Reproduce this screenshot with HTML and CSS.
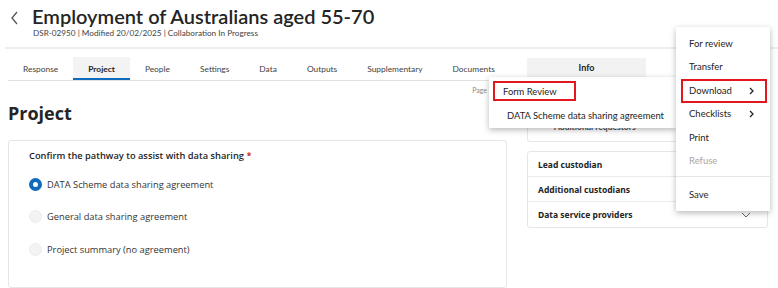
FILE: index.html
```html
<!DOCTYPE html>
<html lang="en">
<head>
    <meta charset="UTF-8">
    <title>Employment of Australians aged 55-70</title>
    <link rel="stylesheet" href="styles.css">
</head>
<body>

    <div class="header">
        <svg class="back" width="10" height="14" viewBox="0 0 10 14">
            <path d="M7 1 L2 7 L7 13" fill="none" stroke="#555" stroke-width="1.3"/>
        </svg>
        <div>
            <h1>Employment of Australians aged 55-70</h1>
            <div class="meta">DSR-02950 | Modified 20/02/2025 | Collaboration In Progress</div>
        </div>
    </div>

    <div class="layout">
        <div class="main">
            <div class="tabs">
                <div class="tab">Response</div>
                <div class="tab active">Project</div>
                <div class="tab">People</div>
                <div class="tab">Settings</div>
                <div class="tab">Data</div>
                <div class="tab">Outputs</div>
                <div class="tab">Supplementary</div>
                <div class="tab">Documents</div>
            </div>
            <div class="pager">Page</div>
            <h2>Project</h2>
            <div class="card">
                <div class="question">Confirm the pathway to assist with data sharing <span class="req">*</span></div>
                <label class="option"><span class="radio checked"></span>DATA Scheme data sharing agreement</label>
                <label class="option"><span class="radio"></span>General data sharing agreement</label>
                <label class="option"><span class="radio"></span>Project summary (no agreement)</label>
            </div>
        </div>

        <div class="side">
            <div class="info-tab">Info</div>
            <div class="side-box">Additional requestors</div>
            <div class="side-card">
                <div class="side-row">Lead custodian</div>
                <div class="side-row">Additional custodians</div>
                <div class="side-row">Data service providers
                    <svg width="10" height="6" viewBox="0 0 10 6"><path d="M1 1 L5 5 L9 1" fill="none" stroke="#666" stroke-width="1"/></svg>
                </div>
            </div>
        </div>
    </div>

    <!-- download submenu -->
    <div class="submenu">
        <div class="sub-item boxed">Form Review</div>
        <div class="sub-item">DATA Scheme data sharing agreement</div>
    </div>

    <!-- actions menu -->
    <div class="menu">
        <div class="menu-item">For review</div>
        <div class="menu-item">Transfer</div>
        <div class="menu-item boxed">Download
            <svg class="chev" width="5" height="8" viewBox="0 0 5 8"><path d="M1 1 L4 4 L1 7" fill="none" stroke="#242424" stroke-width="1.3"/></svg>
        </div>
        <div class="menu-item">Checklists
            <svg class="chev" width="5" height="8" viewBox="0 0 5 8"><path d="M1 1 L4 4 L1 7" fill="none" stroke="#242424" stroke-width="1.3"/></svg>
        </div>
        <div class="menu-item">Print</div>
        <div class="menu-item disabled">Refuse</div>
        <div class="menu-sep"></div>
        <div class="menu-item">Save</div>
    </div>

</body>
</html>
```

FILE: styles.css
```css
* {
    margin: 0;
    padding: 0;
    box-sizing: border-box;
}

body {
    font-family: 'Lato', sans-serif;
    background: #fff;
    color: #242424;
    width: 778px;
    height: 288px;
    overflow: hidden;
    position: relative;
}

.header {
    display: flex;
    align-items: flex-start;
    height: 49px;
    border-bottom: 2px solid #ededed;
    margin-left: 5px;
    padding: 5px 0 0 5px;
}

.back {
    margin-top: 6px;
    margin-right: 12px;
}

h1 {
    font-size: 20px;
    font-weight: 600;
    line-height: 22px;
    color: #242424;
}

.meta {
    font-size: 8.2px;
    color: #424242;
    margin: 1px 0 0 1px;
    line-height: 11px;
}

.layout {
    display: grid;
    grid-template-columns: 499px 241px;
    gap: 20px;
    padding: 8px 8px 0;
}

.tabs {
    display: flex;
    border-bottom: 1px solid #e0e0e0;
    height: 24px;
}

.tab {
    padding: 0 15px;
    font-size: 8.4px;
    line-height: 24px;
    color: #424242;
}

.tab.active {
    background: #f3f3f3;
    font-weight: 700;
    color: #242424;
    border-bottom: 2px solid #0f6cbd;
}

.pager {
    text-align: right;
    font-size: 7px;
    color: #888;
    margin: 5px 20px 0 0;
    height: 14px;
}

h2 {
    font-family: 'Open Sans', sans-serif;
    font-size: 18px;
    font-weight: 700;
    color: #242424;
    line-height: 26px;
    margin-bottom: 14px;
}

.card {
    font-family: 'Open Sans', sans-serif;
    border: 1px solid #e6e6e6;
    border-radius: 3px;
    height: 148px;
    padding: 7px 20px;
}

.question {
    font-size: 9.3px;
    font-weight: 600;
    color: #242424;
    line-height: 16px;
    margin-bottom: 12px;
}

.req {
    color: #c50f1f;
}

.option {
    display: flex;
    align-items: center;
    font-size: 9.3px;
    color: #333;
    height: 32.5px;
    margin-top: -8px;
    margin-bottom: 8px;
}

.radio {
    width: 13px;
    height: 13px;
    border-radius: 50%;
    background: #f3f3f3;
    border: 1px solid #ececec;
    margin-right: 5px;
}

.radio.checked {
    background: #fff;
    border: 4px solid #0f6cbd;
}

.info-tab {
    background: #f2f2f2;
    width: 119px;
    height: 19px;
    margin-top: 1px;
    text-align: center;
    font-size: 9px;
    font-weight: 700;
    line-height: 19px;
}

.side-box {
    margin-top: 22px;
    border: 1px solid #e6e6e6;
    border-top: none;
    border-radius: 0 0 3px 3px;
    height: 43px;
    font-size: 8.5px;
    font-weight: 700;
    color: #555;
    padding: 22px 0 0 26px;
    line-height: 12px;
}

.side-card {
    margin-top: 9px;
    border: 1px solid #e6e6e6;
    border-radius: 3px;
}

.side-row {
    display: flex;
    align-items: center;
    justify-content: space-between;
    font-family: 'Noto Sans', sans-serif;
    font-size: 8.5px;
    font-weight: 700;
    color: #242424;
    height: 25px;
    padding: 0 16px 0 10px;
    border-bottom: 1px solid #ebebeb;
}

.side-row:last-child {
    border-bottom: none;
}

/* overlays */
.submenu {
    position: absolute;
    left: 489px;
    top: 77px;
    width: 187px;
    height: 51px;
    background: #fff;
    box-shadow: 0 2px 6px rgba(0, 0, 0, 0.28);
    padding: 4px;
}

.sub-item {
    font-size: 9.4px;
    color: #242424;
    height: 20px;
    line-height: 17px;
    padding-left: 12px;
    border: 2px solid transparent;
    white-space: nowrap;
}

.sub-item + .sub-item {
    margin-top: 4px;
}

.sub-item.boxed {
    border-color: #e3171e;
    width: 83px;
    padding-left: 8px;
}

.menu {
    position: absolute;
    left: 676px;
    top: 27px;
    width: 94px;
    height: 184px;
    background: #fff;
    box-shadow: 0 2px 6px rgba(0, 0, 0, 0.28);
    padding: 5px 3px 0 5px;
}

.menu-item {
    font-size: 9.5px;
    color: #242424;
    height: 23.5px;
    line-height: 20px;
    padding-left: 6px;
    border: 2px solid transparent;
    display: flex;
    align-items: center;
}

.menu-item.boxed {
    border-color: #e3171e;
}

.menu-item.disabled {
    color: #a6a6a6;
}

.chev {
    margin-left: auto;
    margin-right: 11px;
}

.menu-sep {
    height: 1px;
    background: #e6e6e6;
    margin: 3px -3px 6px -5px;
}
```
